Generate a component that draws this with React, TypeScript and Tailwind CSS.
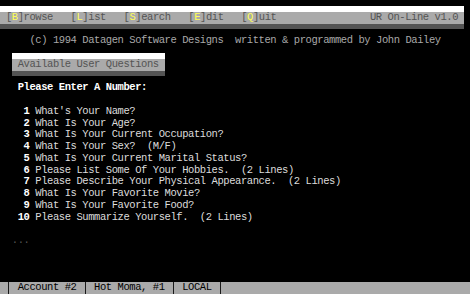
import React from 'react';

// 80x25 text screen scaled to 470x294: each cell is 5.875 x 11.76
const menu: [string, string][] = [
  ['B', 'rowse'],
  ['L', 'ist'],
  ['S', 'earch'],
  ['E', 'dit'],
  ['Q', 'uit'],
];

const questions = [
  "What's Your Name?",
  'What Is Your Age?',
  'What Is Your Current Occupation?',
  'What Is Your Sex?  (M/F)',
  'What Is Your Current Marital Status?',
  'Please List Some Of Your Hobbies.  (2 Lines)',
  'Please Describe Your Physical Appearance.  (2 Lines)',
  'What Is Your Favorite Movie?',
  'What Is Your Favorite Food?',
  'Please Summarize Yourself.  (2 Lines)',
];

function Row({ children, className = '' }: { children?: React.ReactNode; className?: string }) {
  return <div className={`h-[11.76px] shrink-0 whitespace-pre ${className}`}>{children}</div>;
}

function Divider() {
  return (
    <span className="inline-flex h-full w-[5.875px] justify-center align-top">
      <span className="h-full w-px bg-[#1a1a1a]" />
    </span>
  );
}

export default function App() {
  return (
    <div className="flex h-[294px] w-[470px] flex-col overflow-hidden bg-black font-['Liberation_Mono','DejaVu_Sans_Mono',monospace] text-[10.5px] leading-[11.76px] tracking-[-0.426px]">
      {/* menu bar, drawn with half blocks above and below */}
      <Row className="flex flex-col">
        <div className="h-1/2" />
        <div className="h-1/2 w-[464px] bg-white" />
      </Row>
      <Row className="flex w-[464px] justify-between bg-[#aaaaaa] px-[5.875px] text-[#545454]">
        <span>
          {menu.map(([key, rest], i) => (
            <span key={key}>
              {i > 0 && '   '}[<span className="text-[#ffff55]">{key}</span>]{rest}
            </span>
          ))}
        </span>
        <span>UR On-Line v1.0</span>
      </Row>
      <Row className="flex flex-col">
        <div className="h-1/2 w-[464px] bg-[#545454]" />
      </Row>

      <Row className="pl-[29.375px] text-[#a8a8a8]">
        (c) 1994 Datagen Software Designs  written &amp; programmed by John Dailey
      </Row>

      {/* panel title */}
      <Row className="flex flex-col pl-[11.75px]">
        <div className="h-1/2" />
        <div className="h-1/2 w-[152.75px] bg-white" />
      </Row>
      <Row className="ml-[11.75px] w-[152.75px] bg-[#aaaaaa] pl-[5.875px] text-[#545454]">
        Available User Questions
      </Row>
      <Row className="pl-[11.75px]">
        <div className="h-1/2 w-[152.75px] bg-[#545454]" />
      </Row>

      <Row className="pl-[17.625px] font-bold text-white">Please Enter A Number:</Row>
      <Row />

      {questions.map((q, i) => (
        <Row key={i} className="pl-[17.625px]">
          <span className="font-bold text-white">{String(i + 1).padStart(2, ' ')}</span>
          <span className="text-[#dcdcdc]"> {q}</span>
        </Row>
      ))}

      <Row />
      <Row className="pl-[11.75px] text-[#545454]">...</Row>
      <Row />
      <Row />
      <Row />

      {/* status bar */}
      <Row className="flex w-[470px] items-stretch bg-[#aaaaaa] text-black">
        <span className="w-[5.875px]" />
        <Divider />
        <span> Account #2 </span>
        <Divider />
        <span> Hot Moma, #1 </span>
        <Divider />
        <span> LOCAL </span>
        <Divider />
      </Row>
    </div>
  );
}
